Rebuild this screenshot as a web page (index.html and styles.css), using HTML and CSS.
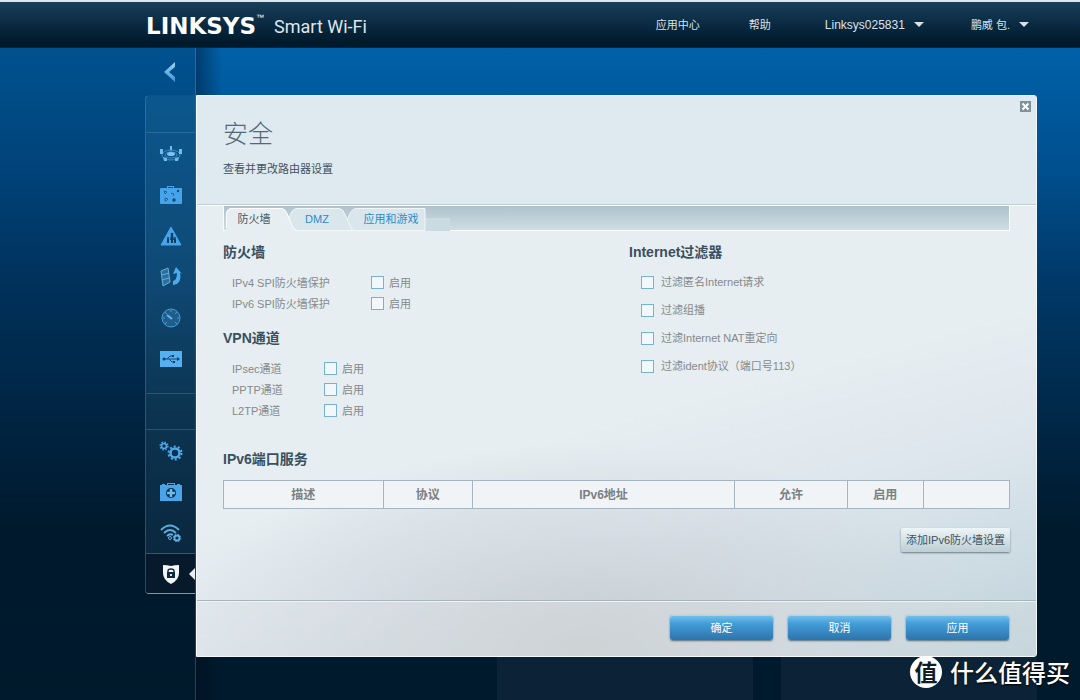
FILE: index.html
```html
<!DOCTYPE html>
<html lang="zh-CN">
<head>
<meta charset="utf-8">
<title>Linksys Smart Wi-Fi</title>
<link rel="stylesheet" href="styles.css">
</head>
<body>
<header class="topbar">
  <div class="brand"><span class="brand-name">LINKSYS</span><span class="brand-tm">™</span><span class="brand-sub">Smart Wi-Fi</span></div>
  <nav class="topnav">
    <a href="#">应用中心</a>
    <a href="#">帮助</a>
    <a class="network" href="#">Linksys025831<span class="caret"></span></a>
    <a href="#">鹏威 包.<span class="caret"></span></a>
  </nav>
</header>

<div class="page">
  <aside class="sidebar">
    <button class="back" type="button" aria-label="返回">
      <svg width="14" height="20" viewBox="0 0 14 20"><defs><linearGradient id="arrow" x1="0" y1="0" x2="0" y2="1"><stop offset="0" stop-color="#9ad4f4"/><stop offset="1" stop-color="#3e95d4"/></linearGradient></defs><path fill="url(#arrow)" d="M12 0 1 10l11 10v-5l-6-5 6-5z"/></svg>
    </button>
    <nav class="menu">
      <div class="menu-space"></div>
      <div class="menu-group">
        <a href="#" aria-label="网络映射"><svg width="22" height="16" viewBox="0 0 22 16"><g fill="none" stroke="#3f8dc2"><ellipse cx="11" cy="9" rx="9" ry="5"/><ellipse cx="11" cy="9" rx="6" ry="3"/><path d="M11 3v3M6 13l2-2M16 13l-2-2"/></g><ellipse cx="11" cy="8" rx="4" ry="2" fill="#7cc3ee"/><path fill="#6fbbea" d="M0 3h3v5H0zM22 3h-3v5h3zM10 0h2v4h-2zM3 11l4 1v3H4zM19 11l-4 1v3h3z"/></svg></a>
        <a href="#" aria-label="访客访问"><svg width="22" height="18" viewBox="0 0 22 18"><path fill="#46a4ea" d="M1 2h6V0h7v2h7q1 0 1 1v14q0 1-1 1H1q-1 0-1-1V3q0-1 1-1z"/><path fill="#14568a" d="M8 1h5v1H8z"/><g fill="none" stroke="#1c669d"><path d="M4 5l3 1-2 2zM11 8l1-1 2 1-1 2M5 12l3 1-2 2H5z"/></g><g fill="#0d4977"><circle cx="18" cy="5" r="1.200"/><circle cx="14" cy="14" r="1.700"/></g></svg></a>
        <a href="#" aria-label="家长控制"><svg width="22" height="20" viewBox="0 0 22 20"><path fill="#46a4ea" stroke="#46a4ea" stroke-linejoin="round" d="M11 1 21 19H1z"/><g fill="#0c3e66"><circle cx="12" cy="8" r="1.300"/><circle cx="8" cy="12" r="1"/><circle cx="15" cy="12" r="1"/><path d="M11 9h2l1 5h-1v3h-2v-3h-1zM7 13h2v4H7zM14 13h2v4h-2z"/></g></svg></a>
        <a href="#" aria-label="媒体优先级"><svg width="22" height="20" viewBox="0 0 22 20"><g fill="#2c6f9f" stroke="#68aed8"><path d="m1 4 7-3 2 14-7 4z"/><path d="m2 8 7-2M2 13l7-2"/></g><path fill="#4baced" d="M16 0 22 7l-2-1q2 11-7 12v-4q4-1 4-8l-4 1z"/></svg></a>
        <a href="#" aria-label="速度测试"><svg width="20" height="20" viewBox="0 0 20 20"><circle cx="10" cy="10" r="9" fill="#205d8b" stroke="#439edc"/><g stroke="#4b9bd0"><path d="M10 2v2M4 4l2 2M2 10h2M16 10h2M16 4l-2 2M4 16l2-2M16 16l-2-2"/><path stroke="#68b6e9" stroke-width="2" d="m6 7 5 4"/></g></svg></a>
        <a href="#" aria-label="USB 存储"><svg width="22" height="16" viewBox="0 0 22 16"><path fill="#55b0f1" d="M0 0h22v16H0z"/><g fill="none" stroke="#164a72"><path d="M3 8h15M7 8l3-3h3M9 8l3 3h2"/></g><g fill="#123e60"><circle cx="4" cy="8" r="1.500"/><path d="m17 6 3 2-3 2zM12 4h2v2h-2zM13 10h2v2h-2z"/></g></svg></a>
      </div>
      <div class="menu-space menu-space-mid"></div>
      <div class="menu-group">
        <a href="#" aria-label="连接"><svg width="24" height="20" viewBox="0 0 24 20"><g fill="none" stroke="#4ea9ea"><circle cx="5" cy="5" r="2.500" stroke-width="1.500"/><circle cx="5" cy="5" r="3.800" stroke-width="1.500" stroke-dasharray="1.500 1.480"/><circle cx="16" cy="12" r="4.500" stroke-width="2.500"/><circle cx="16" cy="12" r="6.500" stroke-width="2" stroke-dasharray="2.040 2.040"/></g></svg></a>
        <a href="#" aria-label="故障排除"><svg width="22" height="18" viewBox="0 0 22 18"><path fill="#4aa5e8" d="M0 2h2V1h3v1h2V0h8v2h2V1h3v1h2v16H0z"/><path fill="#0d304d" d="M8 1h6v1H8z"/><circle cx="11" cy="10" r="5" fill="#0d304d"/><path stroke="#6cbdf3" stroke-width="2.500" d="M11 6v8M7 10h8"/></svg></a>
        <a href="#" aria-label="无线"><svg width="22" height="18" viewBox="0 0 22 18"><g fill="none" stroke="#5faee0" stroke-width="1.800"><path d="M1 6q9-9 18 0M4 9q6-6 12 0M7 12q3-3 6-1"/><circle cx="10" cy="14" r="1.500" stroke-width="1"/><circle cx="17" cy="14" r="2.500"/><circle cx="17" cy="14" r="3.800" stroke-width="1" stroke-dasharray="1.500 1.480"/></g></svg></a>
      </div>
      <a class="menu-active" href="#" aria-label="安全"><svg width="18" height="20" viewBox="0 0 18 20"><path fill="#f2f5f7" d="M1 1q4 0 8 1 4-1 8-1v8q0 7-8 11Q1 16 1 9z"/><path fill="none" stroke="#10283d" stroke-width="1.400" d="M6 9V7q0-2 3-2t3 2v2"/><path fill="#10283d" d="M5 8h8v6H5z"/><path fill="#dce4e9" d="M8 10h2v2H8z"/></svg></a>
    </nav>
  </aside>

  <div class="stage">
    <main class="dialog">
      <button class="close" type="button" aria-label="关闭"><svg width="11" height="11" viewBox="0 0 11 11"><path fill="#7e929e" d="M0 0h11v11H0z"/><path stroke="#fff" stroke-width="2" d="m2.500 2.500 6 6M8.500 2.500l-6 6"/></svg></button>
      <div class="dialog-head">
        <h1>安全</h1>
        <p>查看并更改路由器设置</p>
      </div>
      <div class="dialog-body">
        <div class="tabs" role="tablist">
          <svg class="tab-shapes" width="226" height="25" viewBox="0 0 226 25" aria-hidden="true">
            <path fill="#cbdbe2" d="M200 12h26v13h-26z"/>
            <path fill="#d9e6eb" stroke="#f1f7f9" d="M116 24.500C124 21 124 2.500 132 2.500h69v22z"/>
            <path fill="#d9e6eb" stroke="#f1f7f9" d="M58 24.500C66 21 64 2.500 73 2.500h42q4 0 6 6l5 11q1 5 4 5z"/>
            <path fill="#e6eef1" d="M2 25V9q0-7 6-7h49q4 0 6 5l5 13q2 5 5 5z"/>
            <path fill="none" stroke="#fff" d="M2.500 21V9q0-6.500 6-6.500H57q4 0 6 5l5 12q2 5 5 5"/>
          </svg>
          <button class="tab tab-first" type="button" role="tab" aria-selected="true">防火墙</button>
          <button class="tab tab-mid" type="button" role="tab" aria-selected="false">DMZ</button>
          <button class="tab tab-last" type="button" role="tab" aria-selected="false">应用和游戏</button>
        </div>

        <div class="columns">
          <div>
            <section class="group">
              <h2>防火墙</h2>
              <div class="row row-wide"><span id="ip4">IPv4 SPI防火墙保护</span><label><input type="checkbox" aria-describedby="ip4">启用</label></div>
              <div class="row row-wide"><span id="ip6">IPv6 SPI防火墙保护</span><label><input type="checkbox" aria-describedby="ip6">启用</label></div>
            </section>
            <section class="group">
              <h2>VPN通道</h2>
              <div class="row"><span id="ipsec">IPsec通道</span><label><input type="checkbox" aria-describedby="ipsec">启用</label></div>
              <div class="row"><span id="pptp">PPTP通道</span><label><input type="checkbox" aria-describedby="pptp">启用</label></div>
              <div class="row"><span id="l2tp">L2TP通道</span><label><input type="checkbox" aria-describedby="l2tp">启用</label></div>
            </section>
          </div>
          <section class="filters">
            <h2>Internet过滤器</h2>
            <label><input type="checkbox">过滤匿名Internet请求</label>
            <label><input type="checkbox">过滤组播</label>
            <label><input type="checkbox">过滤Internet NAT重定向</label>
            <label><input type="checkbox">过滤ident协议（端口号113）</label>
          </section>
        </div>

        <section class="ports">
          <h2>IPv6端口服务</h2>
          <table>
            <colgroup><col class="c-desc"><col class="c-proto"><col class="c-addr"><col class="c-allow"><col class="c-on"><col></colgroup>
            <thead><tr><th>描述</th><th>协议</th><th>IPv6地址</th><th>允许</th><th>启用</th><td></td></tr></thead>
          </table>
          <button class="add" type="button">添加IPv6防火墙设置</button>
        </section>
      </div>
      <footer class="dialog-foot">
        <button class="primary" type="button">确定</button>
        <button class="primary" type="button">取消</button>
        <button class="primary" type="button">应用</button>
      </footer>
    </main>
    <div class="widgets"><div class="widget"></div><div class="widget"></div></div>
  </div>
</div>

<div class="watermark"><span class="watermark-badge">值</span>什么值得买</div>
</body>
</html>
```

FILE: styles.css
```css
* { box-sizing: border-box; }

body {
  margin: 0;
  min-height: 100vh;
  display: flex;
  flex-direction: column;
  position: relative;
  font-family: "Liberation Sans", "Noto Sans CJK SC", sans-serif;
  font-size: 11px;
  line-height: 16px;
  color: #85898c;
  background: linear-gradient(#0061a9 48px, #004f8e 170px, #003968 280px, #002a4c 400px, #001a2d 530px);
}

h1, h2, p { margin: 0; }
button { font: inherit; border: 0; padding: 0; background: none; cursor: pointer; }
svg { display: block; }

/* top bar */
.topbar {
  height: 48px;
  padding: 0 51px 0 146px;
  display: flex;
  justify-content: space-between;
  align-items: center;
  border-top: 2px solid #dfe5e9;
  border-bottom: 1px solid #00284a;
  background: linear-gradient(#183f5b, #0a2a42 50%, #001a2b 90%);
}
.brand { display: flex; align-items: center; color: #fff; padding-top: 2px; }
.brand-name { font: bold 23px/24px "DejaVu Sans", sans-serif; }
.brand-tm { font-size: 8px; line-height: 8px; align-self: flex-start; padding-top: 2px; }
.brand-sub { font: 18px/24px Roboto, sans-serif; padding: 3px 0 0 10px; color: #dfe6ea; }
.topnav { display: flex; }
.topnav a {
  display: flex;
  align-items: center;
  gap: 9px;
  margin-left: 49px;
  color: #dbe2e7;
  text-decoration: none;
}
.topnav a:last-child { margin-left: 47px; }
.topnav .network { margin-left: 54px; font-size: 12px; }
.caret { border: 5px solid transparent; border-top-color: #dbe2e7; border-bottom: 0; }

/* page frame */
.page {
  flex: 1;
  display: grid;
  grid-template-columns: 196px minmax(0, 1fr);
}
.sidebar {
  padding-left: 145px;
  border-right: 1px solid rgba(120, 170, 205, .3);
  background: linear-gradient(rgba(0, 20, 40, .2), rgba(0, 20, 40, .2) 50%, transparent);
}
.back { display: flex; align-items: center; justify-content: center; width: 100%; height: 47px; }
.menu {
  border: 1px solid rgba(110, 165, 205, .3);
  border-width: 1px 0 0 1px;
  border-radius: 4px 0 0 4px;
  background: linear-gradient(#0b578d, #0f4a76 35%, #0c3552 62%, #0a2439);
}
.menu a { display: flex; align-items: center; justify-content: center; height: 41px; }
.menu-space { height: 37px; border-bottom: 1px solid rgba(110, 165, 205, .3); }
.menu-space-mid { border-top: 1px solid rgba(110, 165, 205, .3); }
.menu-group:nth-child(2) { padding-bottom: 14px; }
.menu .menu-active {
  position: relative;
  border-top: 1px solid #3c5568;
  border-bottom: 1px solid #8497a4;
  border-bottom-left-radius: 3px;
  background: #061a2b;
}
.menu-active::after {
  content: "";
  position: absolute;
  right: 0;
  border: 6px solid transparent;
  border-left: 0;
  border-right-color: #e8eff2;
}

.stage {
  display: flex;
  flex-direction: column;
  padding: 47px 43px 0 0;
  background: linear-gradient(90deg, rgba(0, 10, 25, .4), transparent 26px);
}

/* dialog */
.dialog {
  position: relative;
  border: 1px solid #f4f8fa;
  border-radius: 0 3px 3px 0;
  background:
    radial-gradient(ellipse 48% 36% at 46% 98%, rgba(199, 204, 207, .9), rgba(205, 211, 217, .6) 50%, transparent),
    linear-gradient(165deg, #e6eef1 55%, #dfe7ee 70%, #bfd2da);
}
.dialog-head { height: 109px; padding: 23px 26px; background: #dfeaf0; border-bottom: 1px solid #c3ced4; }
.dialog-head h1 { font-size: 25px; line-height: 30px; font-weight: 300; color: #52697a; }
.dialog-head p { margin-top: 12px; color: #3e5260; }
.close { position: absolute; top: 5px; right: 5px; }
.dialog-body { padding: 0 26px 48px; border-top: 1px solid #fff; }

.tabs {
  position: relative;
  display: flex;
  height: 25px;
  border: 1px solid #f9fcfd;
  border-top: 0;
  background: linear-gradient(#b0c2cc, #cedde4);
}
.tab-shapes { position: absolute; top: 0; left: 0; }
.tab { position: relative; height: 25px; color: #2e8bcb; }
.tab-first { width: 60px; color: #445968; }
.tab-mid { width: 66px; }
.tab-last { width: 82px; }

h2 { font-size: 14px; line-height: 20px; color: #3a5060; font-weight: bold; }
.columns { display: grid; grid-template-columns: 406px minmax(0, 1fr); padding-top: 11px; }
.group { margin-bottom: 14px; }
.group h2 { margin-bottom: 10px; }
.row { display: grid; grid-template-columns: 92px auto; align-items: center; height: 21px; padding-left: 9px; }
.row-wide { grid-template-columns: 139px auto; }
label { display: flex; align-items: center; gap: 5px; }
.filters label { gap: 7px; height: 28px; padding-left: 12px; }
.filters h2 { margin-bottom: 6px; }
input[type="checkbox"] {
  appearance: none;
  width: 13px;
  height: 13px;
  margin: 0;
  border: 1px solid #77b3d1;
  background: #f1f7fa;
}
input[type="checkbox"]:checked { background: #439bd7; }

.ports { display: flex; flex-direction: column; padding-top: 14px; }
table { width: 100%; margin-top: 11px; border-collapse: collapse; table-layout: fixed; background: #f0f4f7; }
th, td { height: 28px; padding: 0; border: 1px solid #a5b6c0; font-size: 12px; font-weight: bold; color: #7c8083; }
.c-desc { width: 20.3%; }
.c-proto { width: 11.4%; }
.c-addr { width: 33.3%; }
.c-allow { width: 14.4%; }
.c-on { width: 9.6%; }

.add {
  align-self: flex-end;
  height: 24px;
  margin-top: 19px;
  padding: 0 5px;
  color: #40525e;
  border-radius: 2px;
  background: linear-gradient(#edf5f7, #bdced4);
  box-shadow: 0 1px 2px rgba(60, 80, 90, .7);
}

.dialog-foot {
  display: flex;
  justify-content: flex-end;
  gap: 15px;
  padding: 14px 27px 16px;
  border-top: 1px solid #a9b5bb;
  background: rgba(222, 228, 228, .25);
  box-shadow: inset 0 1px #edf2f4;
}
.primary {
  width: 103px;
  height: 25px;
  color: #fff;
  border-radius: 3px;
  background: linear-gradient(#75c4ef, #439cd8 35%, #2d74ab);
  box-shadow: 0 1px 2px rgba(30, 60, 80, .7), inset 0 1px #9bdcf7;
}

.widgets { flex: 1; display: grid; grid-template-columns: 256px 256px; gap: 28px; justify-content: end; }
.widget { min-height: 43px; background: #0c2236; }

.watermark {
  position: absolute;
  right: 10px;
  bottom: 11px;
  display: flex;
  align-items: center;
  gap: 8px;
  color: #fff;
  font: 500 24px/34px "Noto Sans CJK SC", sans-serif;
  text-shadow: 0 1px 2px #000;
}
.watermark-badge {
  width: 32px;
  height: 32px;
  border-radius: 50%;
  background: #fff;
  color: #101c26;
  font-size: 23px;
  font-weight: bold;
  line-height: 30px;
  text-align: center;
  text-shadow: none;
}
```
